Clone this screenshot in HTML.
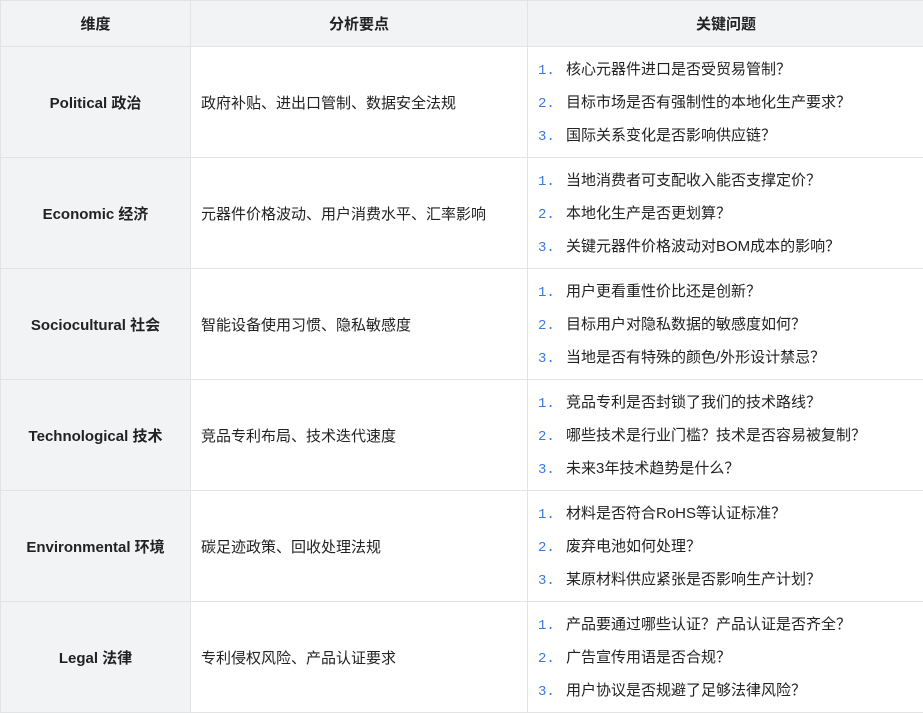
<!DOCTYPE html>
<html><head><meta charset="utf-8"><style>
body{margin:0;background:#fff;font-family:"Liberation Sans","Noto Sans CJK SC",sans-serif;color:#222;font-size:15px}
table{border-collapse:collapse;position:absolute;left:0;top:0;width:924px;table-layout:fixed}
td,th{border:1px solid #e1e3e6;padding:0}
th{background:#f2f3f5;height:45px;font-weight:bold;text-align:center}
td.d{background:#f2f3f5;font-weight:bold;text-align:center}
td.a{padding-left:10px}
tr.r td{height:110px}
td.q{padding-left:10px}
.l{height:33px;line-height:33px;white-space:nowrap}
.n{color:#3b7ae0;font-family:"Liberation Mono",monospace;font-size:14px;display:inline-block;width:28px}
</style></head><body>
<table>
<colgroup><col style="width:190px"><col style="width:337px"><col style="width:397px"></colgroup>
<tr><th>维度</th><th>分析要点</th><th>关键问题</th></tr>
<tr class="r"><td class="d">Political 政治</td><td class="a">政府补贴、进出口管制、数据安全法规</td><td class="q"><div class="l"><span class="n">1.</span>核心元器件进口是否受贸易管制？</div><div class="l"><span class="n">2.</span>目标市场是否有强制性的本地化生产要求？</div><div class="l"><span class="n">3.</span>国际关系变化是否影响供应链？</div></td></tr>
<tr class="r"><td class="d">Economic 经济</td><td class="a">元器件价格波动、用户消费水平、汇率影响</td><td class="q"><div class="l"><span class="n">1.</span>当地消费者可支配收入能否支撑定价？</div><div class="l"><span class="n">2.</span>本地化生产是否更划算？</div><div class="l"><span class="n">3.</span>关键元器件价格波动对BOM成本的影响？</div></td></tr>
<tr class="r"><td class="d">Sociocultural 社会</td><td class="a">智能设备使用习惯、隐私敏感度</td><td class="q"><div class="l"><span class="n">1.</span>用户更看重性价比还是创新？</div><div class="l"><span class="n">2.</span>目标用户对隐私数据的敏感度如何？</div><div class="l"><span class="n">3.</span>当地是否有特殊的颜色/外形设计禁忌？</div></td></tr>
<tr class="r"><td class="d">Technological 技术</td><td class="a">竞品专利布局、技术迭代速度</td><td class="q"><div class="l"><span class="n">1.</span>竞品专利是否封锁了我们的技术路线？</div><div class="l"><span class="n">2.</span>哪些技术是行业门槛？技术是否容易被复制？</div><div class="l"><span class="n">3.</span>未来3年技术趋势是什么？</div></td></tr>
<tr class="r"><td class="d">Environmental 环境</td><td class="a">碳足迹政策、回收处理法规</td><td class="q"><div class="l"><span class="n">1.</span>材料是否符合RoHS等认证标准？</div><div class="l"><span class="n">2.</span>废弃电池如何处理？</div><div class="l"><span class="n">3.</span>某原材料供应紧张是否影响生产计划？</div></td></tr>
<tr class="r"><td class="d">Legal 法律</td><td class="a">专利侵权风险、产品认证要求</td><td class="q"><div class="l"><span class="n">1.</span>产品要通过哪些认证？产品认证是否齐全？</div><div class="l"><span class="n">2.</span>广告宣传用语是否合规？</div><div class="l"><span class="n">3.</span>用户协议是否规避了足够法律风险？</div></td></tr>
</table>
</body></html>
